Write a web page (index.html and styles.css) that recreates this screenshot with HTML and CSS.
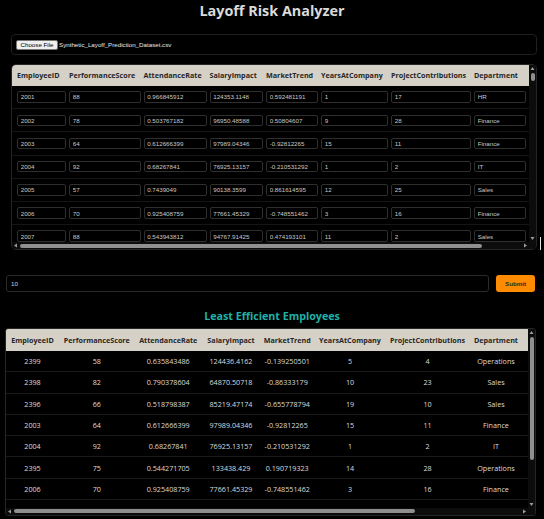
FILE: index.html
```html
<!DOCTYPE html>
<html lang="en">
<head>
<meta charset="utf-8">
<title>Layoff Risk Analyzer</title>
<link rel="stylesheet" href="styles.css">
</head>
<body>
<h1 class="title">Layoff Risk Analyzer</h1>

<div class="upload">
  <button class="choose" type="button">Choose File</button>
  <span class="filename">Synthetic_Layoff_Prediction_Dataset.csv</span>
</div>

<div class="frame sheet-frame">
  <div class="view">
    <table class="sheet">
      <colgroup>
        <col class="c1"><col class="c2"><col class="c3"><col class="c4"><col class="c5"><col class="c6"><col class="c7"><col class="c8"><col class="c9">
      </colgroup>
      <thead>
        <tr><th>EmployeeID</th><th>PerformanceScore</th><th>AttendanceRate</th><th>SalaryImpact</th><th>MarketTrend</th><th>YearsAtCompany</th><th>ProjectContributions</th><th>Department</th><th class="spill"></th></tr>
      </thead>
      <tbody>
        <tr><td><input class="cell" value="2001"></td><td><input class="cell" value="88"></td><td><input class="cell" value="0.966845912"></td><td><input class="cell" value="124353.1148"></td><td><input class="cell" value="0.592481191"></td><td><input class="cell" value="1"></td><td><input class="cell" value="17"></td><td><input class="cell" value="HR"></td><td class="spill"></td></tr>
        <tr><td><input class="cell" value="2002"></td><td><input class="cell" value="78"></td><td><input class="cell" value="0.503767182"></td><td><input class="cell" value="96950.48588"></td><td><input class="cell" value="0.50804607"></td><td><input class="cell" value="9"></td><td><input class="cell" value="28"></td><td><input class="cell" value="Finance"></td><td class="spill"></td></tr>
        <tr><td><input class="cell" value="2003"></td><td><input class="cell" value="64"></td><td><input class="cell" value="0.612666399"></td><td><input class="cell" value="97989.04346"></td><td><input class="cell" value="-0.92812265"></td><td><input class="cell" value="15"></td><td><input class="cell" value="11"></td><td><input class="cell" value="Finance"></td><td class="spill"></td></tr>
        <tr><td><input class="cell" value="2004"></td><td><input class="cell" value="92"></td><td><input class="cell" value="0.68267841"></td><td><input class="cell" value="76925.13157"></td><td><input class="cell" value="-0.210531292"></td><td><input class="cell" value="1"></td><td><input class="cell" value="2"></td><td><input class="cell" value="IT"></td><td class="spill"></td></tr>
        <tr><td><input class="cell" value="2005"></td><td><input class="cell" value="57"></td><td><input class="cell" value="0.7439049"></td><td><input class="cell" value="90138.3599"></td><td><input class="cell" value="0.861614595"></td><td><input class="cell" value="12"></td><td><input class="cell" value="25"></td><td><input class="cell" value="Sales"></td><td class="spill"></td></tr>
        <tr><td><input class="cell" value="2006"></td><td><input class="cell" value="70"></td><td><input class="cell" value="0.925408759"></td><td><input class="cell" value="77661.45329"></td><td><input class="cell" value="-0.748551462"></td><td><input class="cell" value="3"></td><td><input class="cell" value="16"></td><td><input class="cell" value="Finance"></td><td class="spill"></td></tr>
        <tr><td><input class="cell" value="2007"></td><td><input class="cell" value="88"></td><td><input class="cell" value="0.543943812"></td><td><input class="cell" value="94767.91425"></td><td><input class="cell" value="0.474193101"></td><td><input class="cell" value="11"></td><td><input class="cell" value="2"></td><td><input class="cell" value="Sales"></td><td class="spill"></td></tr>
      </tbody>
    </table>
  </div>
  <div class="vbar">
    <svg class="arrow" viewBox="0 0 7 7"><path d="M3.5 2L5.5 5H1.5z"/></svg>
    <div class="vtrack"><div class="vthumb" style="height:8px"></div></div>
    <svg class="arrow" viewBox="0 0 7 7"><path d="M3.5 5L5.5 2H1.5z"/></svg>
  </div>
  <div class="hbar">
    <svg class="arrow" viewBox="0 0 7 7"><path d="M2 3.5L5 1.5V5.5z"/></svg>
    <div class="htrack"><div class="hthumb" style="width:462px"></div></div>
    <svg class="arrow" viewBox="0 0 7 7"><path d="M5 3.5L2 1.5V5.5z"/></svg>
  </div>
  <div class="corner"></div>
</div>

<div class="controls">
  <input class="count" value="10">
  <button class="submit" type="button">Submit</button>
</div>

<h2 class="subtitle">Least Efficient Employees</h2>

<div class="frame result-frame">
  <div class="view">
    <table class="result">
      <colgroup>
        <col class="r1"><col class="r2"><col class="r3"><col class="r4"><col class="r5"><col class="r6"><col class="r7"><col class="r8"><col class="r9">
      </colgroup>
      <thead>
        <tr><th>EmployeeID</th><th>PerformanceScore</th><th>AttendanceRate</th><th>SalaryImpact</th><th>MarketTrend</th><th>YearsAtCompany</th><th>ProjectContributions</th><th>Department</th><th class="spill"></th></tr>
      </thead>
      <tbody>
        <tr><td>2399</td><td>58</td><td>0.635843486</td><td>124436.4162</td><td>-0.139250501</td><td>5</td><td>4</td><td>Operations</td><td class="spill"></td></tr>
        <tr><td>2398</td><td>82</td><td>0.790378604</td><td>64870.50718</td><td>-0.86333179</td><td>10</td><td>23</td><td>Sales</td><td class="spill"></td></tr>
        <tr><td>2396</td><td>66</td><td>0.518798387</td><td>85219.47174</td><td>-0.655778794</td><td>19</td><td>10</td><td>Sales</td><td class="spill"></td></tr>
        <tr><td>2003</td><td>64</td><td>0.612666399</td><td>97989.04346</td><td>-0.92812265</td><td>15</td><td>11</td><td>Finance</td><td class="spill"></td></tr>
        <tr><td>2004</td><td>92</td><td>0.68267841</td><td>76925.13157</td><td>-0.210531292</td><td>1</td><td>2</td><td>IT</td><td class="spill"></td></tr>
        <tr><td>2395</td><td>75</td><td>0.544271705</td><td>133438.429</td><td>0.190719323</td><td>14</td><td>28</td><td>Operations</td><td class="spill"></td></tr>
        <tr><td>2006</td><td>70</td><td>0.925408759</td><td>77661.45329</td><td>-0.748551462</td><td>3</td><td>16</td><td>Finance</td><td class="spill"></td></tr>
      </tbody>
    </table>
  </div>
  <div class="vbar">
    <svg class="arrow" viewBox="0 0 7 7"><path d="M3.5 2L5.5 5H1.5z"/></svg>
    <div class="vtrack"><div class="vthumb" style="height:123px"></div></div>
    <svg class="arrow" viewBox="0 0 7 7"><path d="M3.5 5L5.5 2H1.5z"/></svg>
  </div>
  <div class="hbar">
    <svg class="arrow" viewBox="0 0 7 7"><path d="M2 3.5L5 1.5V5.5z"/></svg>
    <div class="htrack"><div class="hthumb" style="width:401px"></div></div>
    <svg class="arrow" viewBox="0 0 7 7"><path d="M5 3.5L2 1.5V5.5z"/></svg>
  </div>
  <div class="corner"></div>
</div>

<div class="cursor"></div>
</body>
</html>
```

FILE: styles.css
```css
* { box-sizing: border-box; }

html, body {
  margin: 0;
  background: #000;
}

body {
  width: 544px;
  height: 519px;
  overflow: hidden;
  position: relative;
  font-family: "Open Sans", "Liberation Sans", sans-serif;
  color: #ddd;
}

.title {
  margin: 0;
  padding-top: 1px;
  text-align: center;
  font-size: 14.4px;
  line-height: 20px;
  font-weight: 700;
  color: #dadada;
}

.upload {
  margin: 13px 7px 0 11px;
  height: 21px;
  border: 1px solid #1f1f1f;
  border-radius: 4px;
  display: flex;
  align-items: center;
  padding-left: 4px;
  gap: 1px;
}

.choose {
  height: 10px;
  padding: 0 3.5px;
  font: 6.2px "Liberation Sans", Arial, sans-serif;
  color: #000;
  background: #efefef;
  border: 1px solid #767676;
  border-radius: 2px;
  line-height: 8px;
}

.filename {
  font: 6.2px "Liberation Sans", Arial, sans-serif;
  color: #e8e8e8;
}

/* framed, scrolled tables */
.frame {
  display: grid;
  grid-template-columns: 1fr 7px;
  grid-template-rows: 1fr 7px;
  border: 1px solid #262626;
  overflow: hidden;
}

.view {
  overflow: hidden;
  min-width: 0;
  min-height: 0;
}

.vbar, .hbar {
  display: flex;
  background: #0c0c0c;
}
.vbar { flex-direction: column; }
.corner { background: #0c0c0c; }

.arrow {
  width: 7px;
  height: 7px;
  flex: none;
  display: block;
  fill: #9c9c9c;
}

.vtrack { flex: 1; padding: 1px 1.5px 0; }
.htrack { flex: 1; padding: 1.5px 0 0 1px; }

.vthumb {
  width: 4px;
  background: #8f8f8f;
  border-radius: 2px;
}
.hthumb {
  height: 4px;
  background: #8f8f8f;
  border-radius: 2px;
}

.spill { padding: 0; }

/* top data sheet */
.sheet-frame {
  margin: 8.5px 7px 0 11px;
  height: 186.5px;
  border-radius: 5px;
}

.sheet {
  table-layout: fixed;
  width: 551px;
  border-collapse: collapse;
}

.c1 { width: 55.5px; }
.c2 { width: 74.5px; }
.c3 { width: 66px; }
.c4 { width: 56.5px; }
.c5 { width: 55px; }
.c6 { width: 70px; }
.c7 { width: 83px; }
.c8 { width: 54.5px; }
.c9 { width: 36px; }

.sheet th {
  height: 21px;
  padding: 0 1.5px;
  background: #d6d1c6;
  color: #262626;
  font-size: 7.2px;
  font-weight: 700;
  text-align: left;
  white-space: nowrap;
}

.sheet td {
  height: 23.2px;
  padding: 0 1.5px;
  border-bottom: 1px solid #151515;
}

.sheet th:first-child,
.sheet td:first-child { padding-left: 5px; }

.cell {
  display: block;
  width: 100%;
  height: 11.5px;
  margin: 0;
  padding: 0 0 0 2.7px;
  background: #000;
  border: 1px solid #2f2f2f;
  border-radius: 2px;
  color: #c9c9c9;
  font: 6.2px "Liberation Sans", Arial, sans-serif;
  outline: none;
}

/* controls */
.controls {
  margin: 24.5px 9px 0 5.5px;
  display: flex;
  gap: 7.5px;
  height: 17px;
}

.count {
  flex: 1;
  height: 17px;
  margin: 0;
  padding: 0 0 0 4.5px;
  background: #000;
  border: 1px solid #2a2a2a;
  border-radius: 3px;
  color: #d0d0d0;
  font: 6.2px "Liberation Sans", Arial, sans-serif;
  outline: none;
}

.submit {
  width: 39px;
  height: 17px;
  padding: 0;
  background: #ff8c00;
  border: none;
  border-radius: 3px;
  color: #2a2a2a;
  font: 700 6.2px "Liberation Sans", Arial, sans-serif;
}

.subtitle {
  margin: 16px 0 4px;
  text-align: center;
  font-size: 10.7px;
  line-height: 16px;
  font-weight: 700;
  color: #1fb1a8;
}

/* results */
.result-frame {
  margin: 0 8px 0 5px;
  height: 188px;
  border-radius: 3px;
}

.result {
  table-layout: fixed;
  width: 522px;
  border-collapse: collapse;
}

.r1 { width: 53px; }
.r2 { width: 75.5px; }
.r3 { width: 67.5px; }
.r4 { width: 58px; }
.r5 { width: 54.5px; }
.r6 { width: 71px; }
.r7 { width: 84px; }
.r8 { width: 53px; }
.r9 { width: 5.5px; }

.result th {
  height: 22px;
  padding: 0 2px;
  background: #d6d1c6;
  color: #262626;
  font-size: 7.2px;
  font-weight: 700;
  text-align: center;
  white-space: nowrap;
}

.result td {
  height: 21.3px;
  padding: 0 2px;
  text-align: center;
  font-size: 7.2px;
  color: #dcdcdc;
  border-bottom: 1px solid #1a1a1a;
  white-space: nowrap;
}

.result th.spill, .result td.spill { padding: 0; }

.cursor {
  position: absolute;
  left: 540px;
  top: 237px;
  width: 1px;
  height: 13px;
  background: #e6e6e6;
}
```
